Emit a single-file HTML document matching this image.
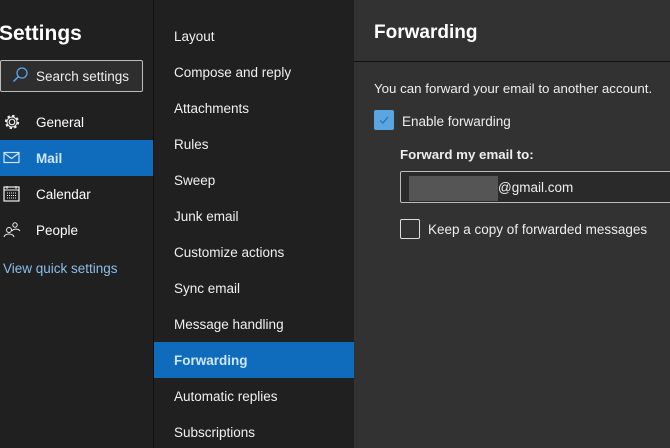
<!DOCTYPE html>
<html><head><style>
body{margin:0;width:670px;height:448px;overflow:hidden;background:#202020;font-family:"Liberation Sans",sans-serif;color:#fff;position:relative}
.a{position:absolute;white-space:nowrap}
#l{left:0;top:0;width:153px;height:448px;background:#202020}
#m{left:153px;top:0;width:200px;height:448px;background:#202020;border-left:1px solid #111;border-right:1px solid #111}
#r{left:354px;top:0;width:316px;height:448px;background:#323232}
.mi{position:absolute;left:20px;font-size:13.5px;color:#f0f0f0}
</style></head><body>
<div class="a" id="l">
 <div class="a" style="left:-1px;top:22px;font-size:21px;font-weight:bold;color:#fff">Settings</div>
 <div class="a" style="left:0;top:60px;width:141px;height:30px;border:1px solid #bbb;border-radius:2px;background:#2e2e2e"></div>
 <svg class="a" style="left:11px;top:66px" width="18" height="18" viewBox="0 0 18 18"><circle cx="11" cy="7" r="5" fill="none" stroke="#5aa6e6" stroke-width="1.3"/><path d="M7.5 10.5L2.5 15.5" stroke="#5aa6e6" stroke-width="1.5"/></svg>
 <div class="a" style="left:36px;top:69px;font-size:13.5px;color:#eee">Search settings</div>
 <svg class="a" style="left:3px;top:113px" width="18" height="18" viewBox="0 0 18 18"><circle cx="9" cy="9" r="2.8" fill="none" stroke="#eee" stroke-width="1.2"/><circle cx="9" cy="9" r="6" fill="none" stroke="#eee" stroke-width="2.2" stroke-dasharray="2.4 2.3"/><circle cx="9" cy="9" r="5" fill="none" stroke="#eee" stroke-width="1"/></svg>
 <div class="a" style="left:36px;top:115px;font-size:13.5px">General</div>
 <div class="a" style="left:0;top:140px;width:153px;height:36px;background:#0f6cbd"></div>
 <svg class="a" style="left:3px;top:151px" width="17" height="13" viewBox="0 0 17 13"><rect x="1" y="1.5" width="15" height="10" fill="none" stroke="#cfe3f7" stroke-width="1.2"/><path d="M1 2L8.5 7.5 16 2" fill="none" stroke="#cfe3f7" stroke-width="1.2"/></svg>
 <div class="a" style="left:36px;top:151px;font-size:13.5px;font-weight:bold;color:#cfe6fb">Mail</div>
 <svg class="a" style="left:3px;top:185px" width="17" height="17" viewBox="0 0 17 17"><rect x="1" y="2" width="15" height="14" fill="none" stroke="#eee" stroke-width="1.2"/><path d="M1 5h15M4 1v3M13 1v3" stroke="#eee"/><path d="M4 8h9M4 10.5h9M4 13h9" stroke="#eee" stroke-dasharray="1 1"/></svg>
 <div class="a" style="left:36px;top:187px;font-size:13.5px">Calendar</div>
 <svg class="a" style="left:3px;top:221px" width="18" height="17" viewBox="0 0 18 17"><circle cx="6" cy="9" r="2.5" fill="none" stroke="#eee"/><path d="M1 16c1-4 9-4 10 0" fill="none" stroke="#eee"/><circle cx="12" cy="4" r="2.2" fill="none" stroke="#eee"/><path d="M9 10c1-2 6-3 8 0" fill="none" stroke="#eee"/></svg>
 <div class="a" style="left:36px;top:223px;font-size:13.5px">People</div>
 <div class="a" style="left:3px;top:261px;font-size:13.5px;color:#8cbdeb">View quick settings</div>
</div>
<div class="a" id="m">
 <div class="mi" style="top:29px">Layout</div>
 <div class="mi" style="top:65px">Compose and reply</div>
 <div class="mi" style="top:101px">Attachments</div>
 <div class="mi" style="top:137px">Rules</div>
 <div class="mi" style="top:173px">Sweep</div>
 <div class="mi" style="top:209px">Junk email</div>
 <div class="mi" style="top:245px">Customize actions</div>
 <div class="mi" style="top:281px">Sync email</div>
 <div class="mi" style="top:317px">Message handling</div>
 <div class="a" style="left:0;top:342px;width:200px;height:36px;background:#0f6cbd"></div>
 <div class="mi" style="top:353px;font-weight:bold;color:#cfe6fb">Forwarding</div>
 <div class="mi" style="top:389px">Automatic replies</div>
 <div class="mi" style="top:425px">Subscriptions</div>
</div>
<div class="a" id="r">
 <div class="a" style="left:20px;top:22px;font-size:19px;font-weight:bold">Forwarding</div>
 <div class="a" style="left:0;top:61px;width:316px;height:1px;background:#111"></div>
 <div class="a" style="left:20px;top:81px;font-size:13.3px;color:#eee">You can forward your email to another account.</div>
 <div class="a" style="left:20px;top:110px;width:20px;height:20px;background:#5ba5e0;border-radius:2px"></div>
 <svg class="a" style="left:24px;top:114px" width="12" height="12" viewBox="0 0 12 12"><path d="M2 6.5L5 9 10 3" fill="none" stroke="#2b6aa3" stroke-width="1"/></svg>
 <div class="a" style="left:48px;top:114px;font-size:13.5px;color:#eee">Enable forwarding</div>
 <div class="a" style="left:46px;top:147px;font-size:13.3px;font-weight:bold;color:#eee">Forward my email to:</div>
 <div class="a" style="left:46px;top:171px;width:290px;height:30px;border:1px solid #bbb;border-radius:2px;background:#2a2a2a"></div>
 <div class="a" style="left:55px;top:176px;width:89px;height:25px;background:#555"></div>
 <div class="a" style="left:144px;top:180px;font-size:13.5px;color:#eee">@gmail.com</div>
 <div class="a" style="left:46px;top:219px;width:18px;height:18px;border:1px solid #ddd;border-radius:2px"></div>
 <div class="a" style="left:74px;top:222px;font-size:13.5px;color:#eee">Keep a copy of forwarded messages</div>
</div>
</body></html>
